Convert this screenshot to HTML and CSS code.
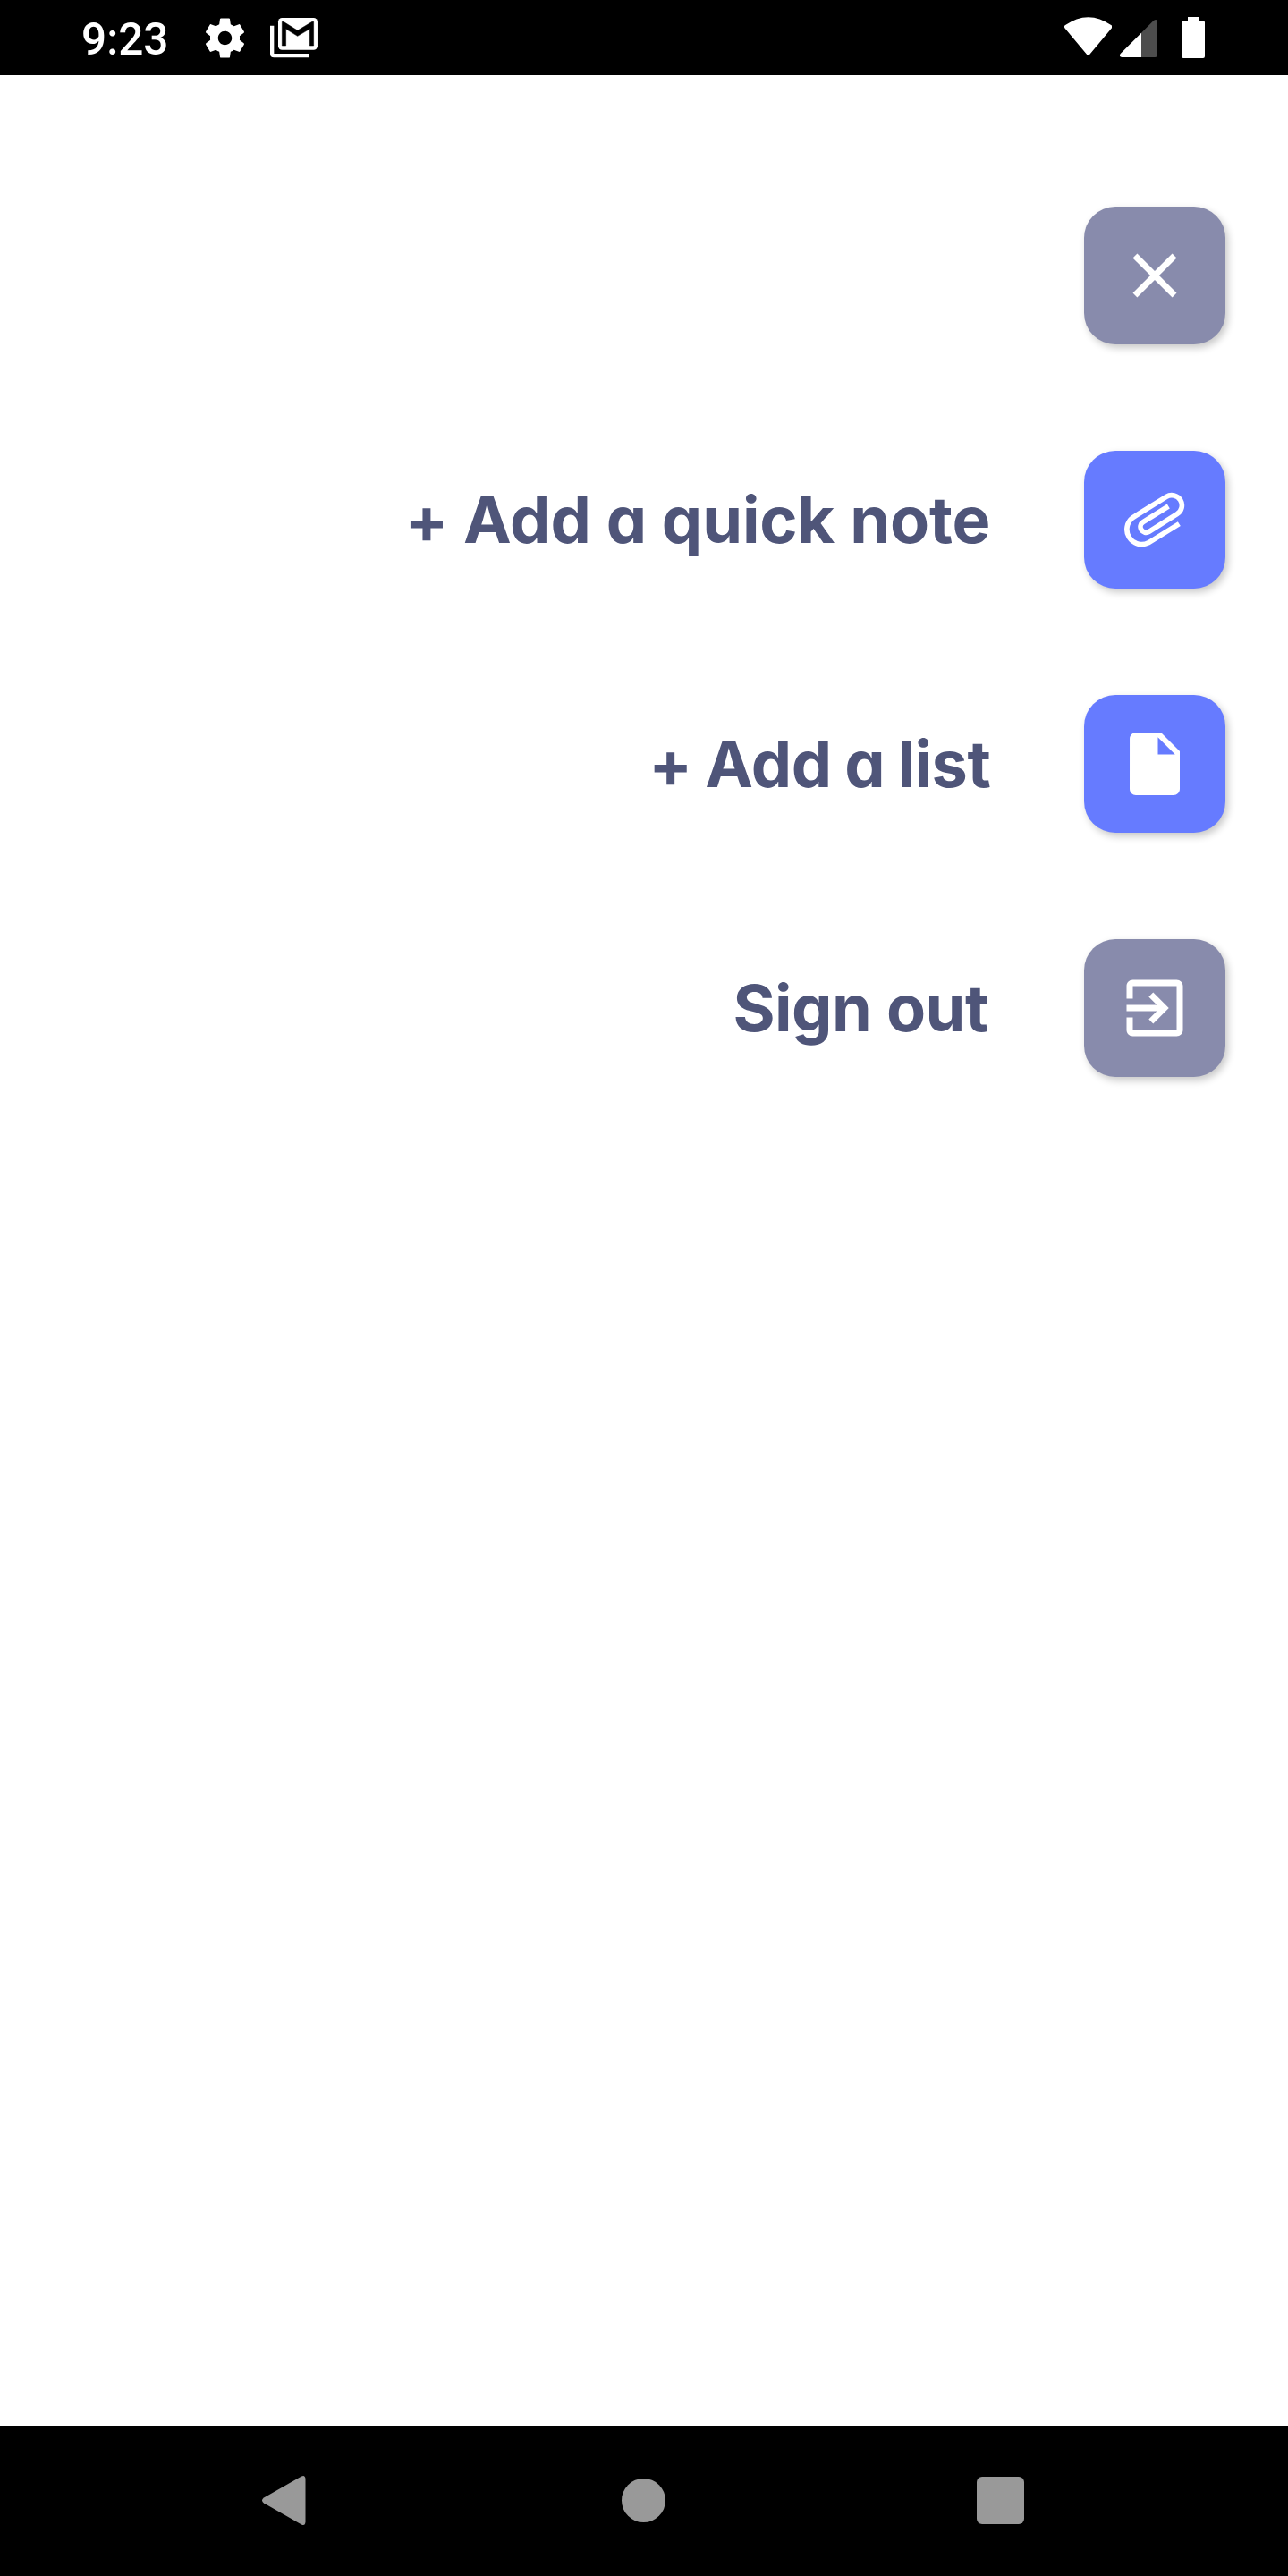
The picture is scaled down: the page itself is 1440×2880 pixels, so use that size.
FILE: index.html
```
<!DOCTYPE html>
<html lang="en">
<head>
<meta charset="utf-8">
<title>Notes menu</title>
<link rel="stylesheet" href="styles.css">
</head>
<body>
<div class="screen">
  <header class="status">
    <span class="clock">9:23</span>
    <svg class="gear" viewBox="0 0 24 24"><path d="M19.43 12.98c.04-.32.07-.64.07-.98s-.03-.66-.07-.98l2.11-1.65c.19-.15.24-.42.12-.64l-2-3.46c-.12-.22-.39-.3-.61-.22l-2.49 1c-.52-.4-1.08-.73-1.69-.98l-.38-2.65C14.46 2.18 14.25 2 14 2h-4c-.25 0-.46.18-.49.42l-.38 2.65c-.61.25-1.17.59-1.69.98l-2.49-1c-.23-.09-.49 0-.61.22l-2 3.46c-.13.22-.07.49.12.64l2.11 1.65c-.04.32-.07.65-.07.98s.03.66.07.98l-2.11 1.65c-.19.15-.24.42-.12.64l2 3.46c.12.22.39.3.61.22l2.49-1c.52.4 1.08.73 1.69.98l.38 2.65c.03.24.24.42.49.42h4c.25 0 .46-.18.49-.42l.38-2.65c.61-.25 1.17-.59 1.69-.98l2.49 1c.23.09.49 0 .61-.22l2-3.46c.12-.22.07-.49-.12-.64l-2.11-1.65zM12 15.5c-1.93 0-3.5-1.57-3.5-3.5s1.57-3.5 3.5-3.5 3.5 1.57 3.5 3.5-1.57 3.5-3.5 3.5z"/></svg>
    <svg class="mail" viewBox="696 60 160 134"><path d="M696 86h13v94h119v13H709q-13 0-13-13z"/><rect x="723" y="60" width="132" height="107" rx="13"/><path class="cut" d="M736 153V73h5l47 29 49-29h5v80h-13V97l-41 24-39-24v56z"/></svg>
    <span class="spacer"></span>
    <svg class="wifi" viewBox="60 58 160 130"><path d="M62 86q78-55 156 0q4 4 1 9l-74 88q-5 6-10 0L61 95q-3-5 1-9z"/></svg>
    <svg class="signal" viewBox="246 66 126 126"><path class="weak" d="M359 69q13-8 13 6v109q0 8-8 8h-46V110z"/><path d="M318 110v82h-65q-11-2-5-12z"/></svg>
    <svg class="battery" viewBox="0 0 26 46"><path d="M7 0h12v4h5q2 0 2 2v38q0 2-2 2H2q-2 0-2-2V6q0-2 2-2h5z"/></svg>
  </header>

  <main class="menu">
    <div class="row">
      <button class="tile muted" aria-label="Close"><svg viewBox="0 0 24 24"><path d="M19 6.41L17.59 5 12 10.59 6.41 5 5 6.41 10.59 12 5 17.59 6.41 19 12 13.41 17.59 19 19 17.59 13.41 12z"/></svg></button>
    </div>
    <div class="row">
      <span class="label">+ Add a quick note</span>
      <button class="tile" aria-label="Add a quick note"><svg class="clip" viewBox="178 177 252 252"><path d="M386 317L283 380.500A50 50 0 0 1 231 295.500L343 226A34 34 0 0 1 379 284L285 343A18.500 18.500 0 0 1 265 311L350 258"/></svg></button>
    </div>
    <div class="row">
      <span class="label list">+ Add a list</span>
      <button class="tile" aria-label="Add a list"><svg viewBox="0 0 24 24"><path d="M6 2c-1.100 0-1.990.9-1.990 2L4 20c0 1.100.89 2 1.990 2H18c1.100 0 2-.9 2-2V8l-6-6H6zm7 7V3.500L18.500 9H13z"/></svg></button>
    </div>
    <div class="row">
      <span class="label out">Sign out</span>
      <button class="tile muted" aria-label="Sign out"><svg viewBox="0 0 24 24"><path d="M10.090 15.590L11.500 17l5-5-5-5-1.410 1.410L12.670 11H3v2h9.670l-2.580 2.590zM19 3H5c-1.110 0-2 .9-2 2v4h2V5h14v14H5v-4H3v4c0 1.100.89 2 2 2h14c1.100 0 2-.9 2-2V5c0-1.100-.9-2-2-2z"/></svg></button>
    </div>
  </main>

  <nav class="navbar">
    <svg class="back" viewBox="0 0 50 58"><path d="M45 1.500q4-2 4.500 3v49q-.5 5-4.500 3L2 32q-4-3 0-6z"/></svg>
    <span class="home"></span>
    <span class="recent"></span>
  </nav>
</div>
</body>
</html>
```
FILE: styles.css
```
* { box-sizing: border-box; }
body { margin: 0; background: #fff; }
svg { display: block; flex: none; fill: #fff; }

.screen {
  width: 1440px;
  height: 2880px;
  display: flex;
  flex-direction: column;
  background: #fff;
}

.status {
  height: 84px;
  flex: none;
  display: flex;
  align-items: flex-start;
  padding: 0 93px 0 91px;
  background: #000;
}
.clock {
  width: 134px;
  margin-top: 15px;
  font: 500 49.500px/58px Roboto, sans-serif;
  color: #fff;
}
.gear { width: 53px; height: 53px; margin-top: 15.500px; }
.mail { width: 53.300px; height: 44.700px; margin: 20px 0 0 24px; }
.cut { fill: #000; stroke: #000; stroke-width: 1.500; }
.spacer { flex: 1; }
.wifi { width: 53.300px; height: 43.300px; margin-top: 19.300px; }
.signal { width: 42px; height: 42px; margin: 22px 27px 0 8.700px; }
.weak { fill: #4d4d4d; }
.battery { width: 26px; height: 46px; margin-top: 19px; }

.menu {
  flex: 1;
  display: flex;
  flex-direction: column;
  gap: 119px;
  padding: 147px 70px 0 0;
}
.row {
  height: 154px;
  display: flex;
  justify-content: flex-end;
  align-items: center;
}
.tile {
  width: 157.700px;
  height: 154px;
  flex: none;
  display: flex;
  align-items: center;
  justify-content: center;
  padding: 0;
  border: 0;
  border-radius: 35px;
  background: #667bff;
  box-shadow: 3px 4px 8px rgba(0, 0, 0, 0.22);
}
.tile.muted { background: #888bac; }
.tile svg { width: 84px; height: 84px; }
.tile .clip { fill: none; stroke: #fff; stroke-width: 17; }

.label {
  margin-right: 105px;
  font: 700 72px/100px Inter, sans-serif;
  font-feature-settings: "cv11";
  letter-spacing: -0.100px;
  white-space: nowrap;
  color: #4f5579;
}
.label.list { letter-spacing: -0.500px; word-spacing: -2px; }
.label.out { letter-spacing: -0.500px; margin-right: 107.500px; }

.navbar {
  height: 168px;
  flex: none;
  display: flex;
  align-items: center;
  padding: 0 295px 2px 293px;
  justify-content: space-between;
  background: #000;
}
.back { width: 49px; height: 57px; fill: #999; }
.home { width: 49px; height: 49px; margin-left: 4px; border-radius: 50%; background: #999; }
.recent { width: 53px; height: 53px; border-radius: 6px; background: #999; }
```
